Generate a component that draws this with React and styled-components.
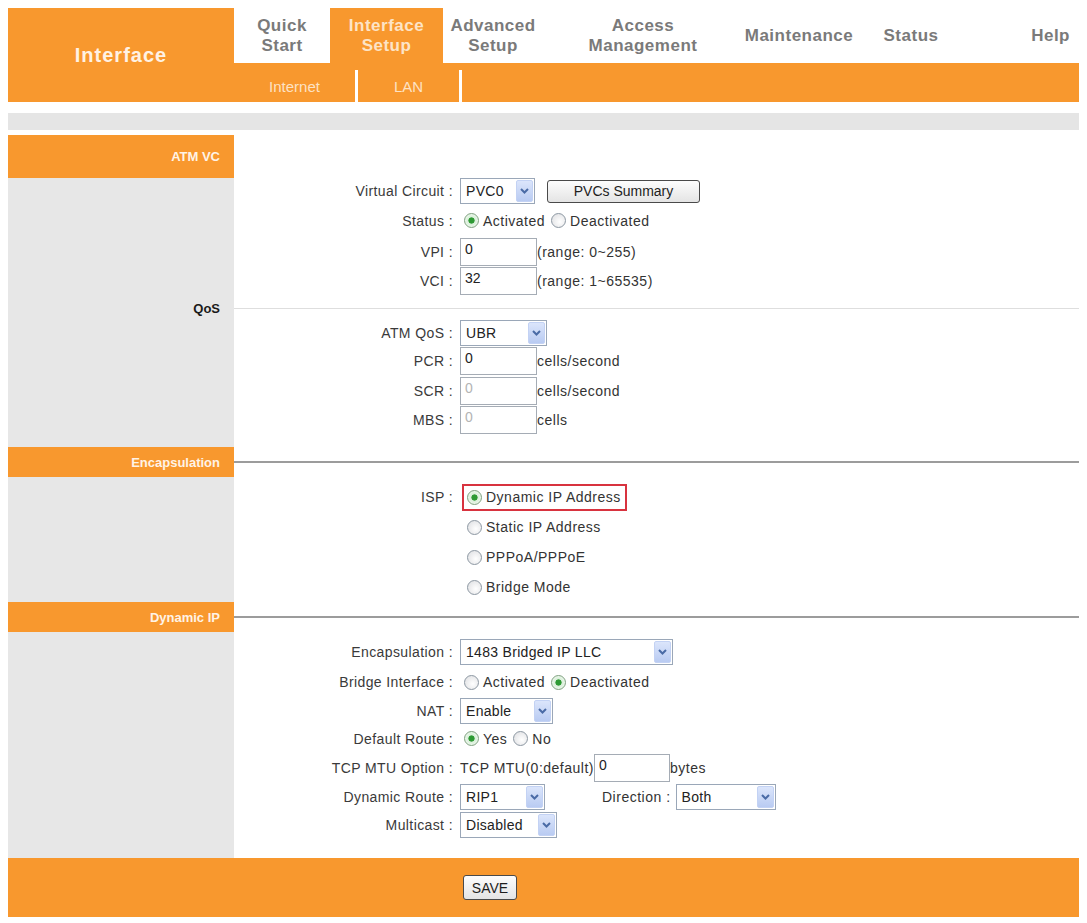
import React from "react";
import styled, { createGlobalStyle } from "styled-components";

const ORANGE = "#f8982e";

const GlobalStyle = createGlobalStyle`
  body {
    margin: 8px;
    background: #ffffff;
    font-family: "Liberation Sans", Arial, sans-serif;
  }
  * { box-sizing: border-box; }
`;

const Page = styled.div`
  width: 1074px;
  background: #ffffff;
  box-shadow: 4px 4px 4px rgba(0, 0, 0, 0.35);
`;

/* ---------- top navigation ---------- */

const Header = styled.header`
  display: grid;
  grid-template-columns: 226px 1fr;
  grid-template-rows: 55px 39px;
`;

const Brand = styled.div`
  grid-row: 1 / span 2;
  background: ${ORANGE};
  display: flex;
  align-items: center;
  justify-content: center;
  color: #fff2e4;
  font-size: 20px;
  font-weight: bold;
  letter-spacing: 1px;
`;

const Tabs = styled.nav`
  display: flex;
`;

const Tab = styled.div`
  width: ${(p) => (p.$w ? `${p.$w}px` : "auto")};
  flex: ${(p) => (p.$w ? "none" : 1)};
  display: flex;
  align-items: center;
  justify-content: ${(p) => (p.$end ? "flex-end" : "center")};
  padding-right: ${(p) => (p.$end ? "12px" : "0")};
  text-align: center;
  background: ${(p) => (p.$active ? ORANGE : "#ffffff")};
  color: ${(p) => (p.$active ? "#fde4c6" : "#7a7a7a")};
  font-size: 17px;
  font-weight: bold;
  line-height: 20px;
  letter-spacing: 0.5px;
`;

const SubNav = styled.div`
  background: ${ORANGE};
  display: flex;
`;

const SubItem = styled.div`
  width: ${(p) => p.$w}px;
  height: 32px;
  align-self: flex-end;
  display: flex;
  align-items: center;
  justify-content: center;
  border-right: 3px solid #ffffff;
  color: #fde2c4;
  font-size: 15px;
`;

const Spacer = styled.div`
  height: ${(p) => p.$h}px;
`;

const Band = styled.div`
  height: 17px;
  background: #e5e5e5;
`;

/* ---------- form sections ---------- */

const Section = styled.section`
  display: grid;
  grid-template-columns: 226px 1fr;
`;

const SideTitle = styled.div`
  height: ${(p) => p.$h}px;
  display: flex;
  align-items: center;
  justify-content: flex-end;
  padding-right: 14px;
  background: ${(p) => (p.$sub ? "#e7e7e7" : ORANGE)};
  color: ${(p) => (p.$sub ? "#1a1a1a" : "#fff3e6")};
  font-size: 13px;
  font-weight: bold;
`;

const HeadRule = styled.div`
  display: flex;
  align-items: center;
`;

const Rule = styled.div`
  flex: 1;
  height: ${(p) => (p.$dark ? 2 : 1)}px;
  background: ${(p) => (p.$dark ? "#9c9c9c" : "#dedede")};
`;

const SidePanel = styled.div`
  background: #e7e7e7;
`;

const Fields = styled.div`
  display: flex;
  flex-direction: column;
  padding: ${(p) => p.$pt || 0}px 0 ${(p) => p.$pb || 0}px;
`;

const Field = styled.div`
  display: grid;
  grid-template-columns: 219px 1fr;
  column-gap: 7px;
  height: ${(p) => p.$h || 30}px;
  align-items: center;
`;

const Label = styled.span`
  text-align: right;
  white-space: nowrap;
  font-size: 14px;
  letter-spacing: 0.4px;
  color: #3a3a3a;
`;

const Controls = styled.div`
  display: flex;
  align-items: center;
  gap: ${(p) => p.$gap || 0}px;
  font-size: 14px;
  letter-spacing: 0.5px;
  color: #333333;
  white-space: nowrap;
`;

const Note = styled.span`
  font-size: 14px;
  letter-spacing: 0.5px;
  color: #333333;
  margin-left: ${(p) => p.$ml || 0}px;
`;

const Input = styled.input`
  width: ${(p) => p.$w}px;
  height: 28px;
  padding: 0 4px 6px;
  border: 1px solid #a5acb5;
  background: #ffffff;
  font-family: inherit;
  font-size: 14px;
  color: ${(p) => (p.disabled ? "#b4b4b4" : "#222222")};
  outline: none;
`;

const SelectBox = styled.div`
  width: ${(p) => p.$w}px;
  height: ${(p) => p.$h || 26}px;
  display: flex;
  align-items: stretch;
  border: 1px solid #9aa7b8;
  background: #ffffff;
  padding: 1px;
  margin-left: ${(p) => p.$ml || 0}px;
`;

const SelectValue = styled.span`
  flex: 1;
  display: flex;
  align-items: center;
  padding-left: 4px;
  font-size: 14px;
  letter-spacing: 0.3px;
  color: #222222;
`;

const SelectArrow = styled.span`
  width: 17px;
  display: flex;
  align-items: center;
  justify-content: center;
  background: linear-gradient(#dbe5fb, #b9cbf2);
  border: 1px solid #c3d2f4;
  border-radius: 2px;
`;

const PushButton = styled.button`
  width: ${(p) => p.$w}px;
  height: ${(p) => p.$h || 23}px;
  margin-left: ${(p) => p.$ml || 0}px;
  border: 1px solid #4a4a4a;
  border-radius: 3px;
  background: linear-gradient(#fdfdfd, #e4e4e4);
  font-family: inherit;
  font-size: 14px;
  color: #1e1e1e;
  padding: 0;
`;

const RadioLabel = styled.span`
  display: inline-flex;
  align-items: center;
  gap: 4px;
  margin-left: ${(p) => p.$ml || 0}px;
`;

const RadioDot = styled.span`
  width: 15px;
  height: 15px;
  border-radius: 50%;
  border: 1px solid ${(p) => (p.$on ? "#7fa07f" : "#8c97a2")};
  background: ${(p) =>
    p.$on
      ? "radial-gradient(circle, #2e9a34 0 2.8px, #d9eed9 3.4px, #f8fff8 100%)"
      : "radial-gradient(circle at 60% 60%, #ffffff, #dcdde0)"};
`;

const Highlight = styled.span`
  display: inline-flex;
  align-items: center;
  height: 27px;
  width: 165px;
  margin-left: 2px;
  padding-left: 3px;
  border: 2px solid #d8333f;
`;

const Footer = styled.footer`
  height: 59px;
  background: ${ORANGE};
  display: flex;
  align-items: center;
  padding-left: 455px;
`;

/* ---------- small pieces ---------- */

const Chevron = () => (
  <svg width="9" height="6" viewBox="0 0 9 6">
    <polyline
      points="1,1 4.5,4.5 8,1"
      fill="none"
      stroke="#4a6ba6"
      strokeWidth="2"
    />
  </svg>
);

const Select = ({ w, ml, children }) => (
  <SelectBox $w={w} $ml={ml}>
    <SelectValue>{children}</SelectValue>
    <SelectArrow>
      <Chevron />
    </SelectArrow>
  </SelectBox>
);

const Radio = ({ on, ml, children }) => (
  <RadioLabel $ml={ml}>
    <RadioDot $on={on} />
    {children}
  </RadioLabel>
);

const tabs = [
  { w: 96, text: ["Quick", "Start"] },
  { w: 113, text: ["Interface", "Setup"], active: true },
  { w: 100, text: ["Advanced", "Setup"] },
  { w: 200, text: ["Access", "Management"] },
  { w: 112, text: ["Maintenance"] },
  { w: 112, text: ["Status"] },
];

export default function App() {
  return (
    <>
      <GlobalStyle />
      <Page>
        <Header>
          <Brand>Interface</Brand>
          <Tabs>
            {tabs.map((t) => (
              <Tab key={t.text[0]} $w={t.w} $active={t.active}>
                {t.text.map((line, i) => (
                  <React.Fragment key={line}>
                    {i > 0 && <br />}
                    {line}
                  </React.Fragment>
                ))}
              </Tab>
            ))}
            <Tab $end>Help</Tab>
          </Tabs>
          <SubNav>
            <SubItem $w={124}>Internet</SubItem>
            <SubItem $w={104}>LAN</SubItem>
          </SubNav>
        </Header>

        <Spacer $h={11} />
        <Band />
        <Spacer $h={5} />

        <Section>
          <SideTitle $h={43}>ATM VC</SideTitle>
          <HeadRule />
          <SidePanel />
          <Fields>
            <Field $h={26}>
              <Label>Virtual Circuit :</Label>
              <Controls>
                <Select w={75}>PVC0</Select>
                <PushButton $w={153} $ml={12}>
                  PVCs Summary
                </PushButton>
              </Controls>
            </Field>
            <Field $h={33}>
              <Label>Status :</Label>
              <Controls>
                <Radio on ml={4}>
                  Activated
                </Radio>
                <Radio ml={6}>Deactivated</Radio>
              </Controls>
            </Field>
            <Field $h={29}>
              <Label>VPI :</Label>
              <Controls>
                <Input $w={77} defaultValue="0" />
                <Note>(range: 0~255)</Note>
              </Controls>
            </Field>
            <Field $h={30}>
              <Label>VCI :</Label>
              <Controls>
                <Input $w={77} defaultValue="32" />
                <Note>(range: 1~65535)</Note>
              </Controls>
            </Field>
          </Fields>
        </Section>

        <Section>
          <SideTitle $h={24} $sub>
            QoS
          </SideTitle>
          <HeadRule>
            <Rule />
          </HeadRule>
          <SidePanel />
          <Fields $pb={13}>
            <Field $h={26}>
              <Label>ATM QoS :</Label>
              <Controls>
                <Select w={87}>UBR</Select>
              </Controls>
            </Field>
            <Field>
              <Label>PCR :</Label>
              <Controls>
                <Input $w={77} defaultValue="0" />
                <Note>cells/second</Note>
              </Controls>
            </Field>
            <Field>
              <Label>SCR :</Label>
              <Controls>
                <Input $w={77} defaultValue="0" disabled />
                <Note>cells/second</Note>
              </Controls>
            </Field>
            <Field $h={28}>
              <Label>MBS :</Label>
              <Controls>
                <Input $w={77} defaultValue="0" disabled />
                <Note>cells</Note>
              </Controls>
            </Field>
          </Fields>
        </Section>

        <Section>
          <SideTitle $h={30}>Encapsulation</SideTitle>
          <HeadRule>
            <Rule $dark />
          </HeadRule>
          <SidePanel />
          <Fields $pt={5}>
            <Field>
              <Label>ISP :</Label>
              <Controls>
                <Highlight>
                  <Radio on>Dynamic IP Address</Radio>
                </Highlight>
              </Controls>
            </Field>
            <Field>
              <Label />
              <Controls>
                <Radio ml={7}>Static IP Address</Radio>
              </Controls>
            </Field>
            <Field>
              <Label />
              <Controls>
                <Radio ml={7}>PPPoA/PPPoE</Radio>
              </Controls>
            </Field>
            <Field>
              <Label />
              <Controls>
                <Radio ml={7}>Bridge Mode</Radio>
              </Controls>
            </Field>
          </Fields>
        </Section>

        <Section>
          <SideTitle $h={30}>Dynamic IP</SideTitle>
          <HeadRule>
            <Rule $dark />
          </HeadRule>
          <SidePanel />
          <Fields $pt={5} $pb={20}>
            <Field>
              <Label>Encapsulation :</Label>
              <Controls>
                <Select w={213}>1483 Bridged IP LLC</Select>
              </Controls>
            </Field>
            <Field>
              <Label>Bridge Interface :</Label>
              <Controls>
                <Radio ml={4}>Activated</Radio>
                <Radio on ml={6}>
                  Deactivated
                </Radio>
              </Controls>
            </Field>
            <Field $h={27}>
              <Label>NAT :</Label>
              <Controls>
                <Select w={93}>Enable</Select>
              </Controls>
            </Field>
            <Field $h={29}>
              <Label>Default Route :</Label>
              <Controls>
                <Radio on ml={4}>
                  Yes
                </Radio>
                <Radio ml={6}>No</Radio>
              </Controls>
            </Field>
            <Field $h={29}>
              <Label>TCP MTU Option :</Label>
              <Controls>
                <Note>TCP MTU(0:default)</Note>
                <Input $w={76} defaultValue="0" />
                <Note>bytes</Note>
              </Controls>
            </Field>
            <Field $h={29}>
              <Label>Dynamic Route :</Label>
              <Controls>
                <Select w={85}>RIP1</Select>
                <Note $ml={57}>Direction :</Note>
                <Select w={100} ml={5}>
                  Both
                </Select>
              </Controls>
            </Field>
            <Field $h={27}>
              <Label>Multicast :</Label>
              <Controls>
                <Select w={97}>Disabled</Select>
              </Controls>
            </Field>
          </Fields>
        </Section>

        <Footer>
          <PushButton $w={54} $h={25}>
            SAVE
          </PushButton>
        </Footer>
      </Page>
    </>
  );
}
